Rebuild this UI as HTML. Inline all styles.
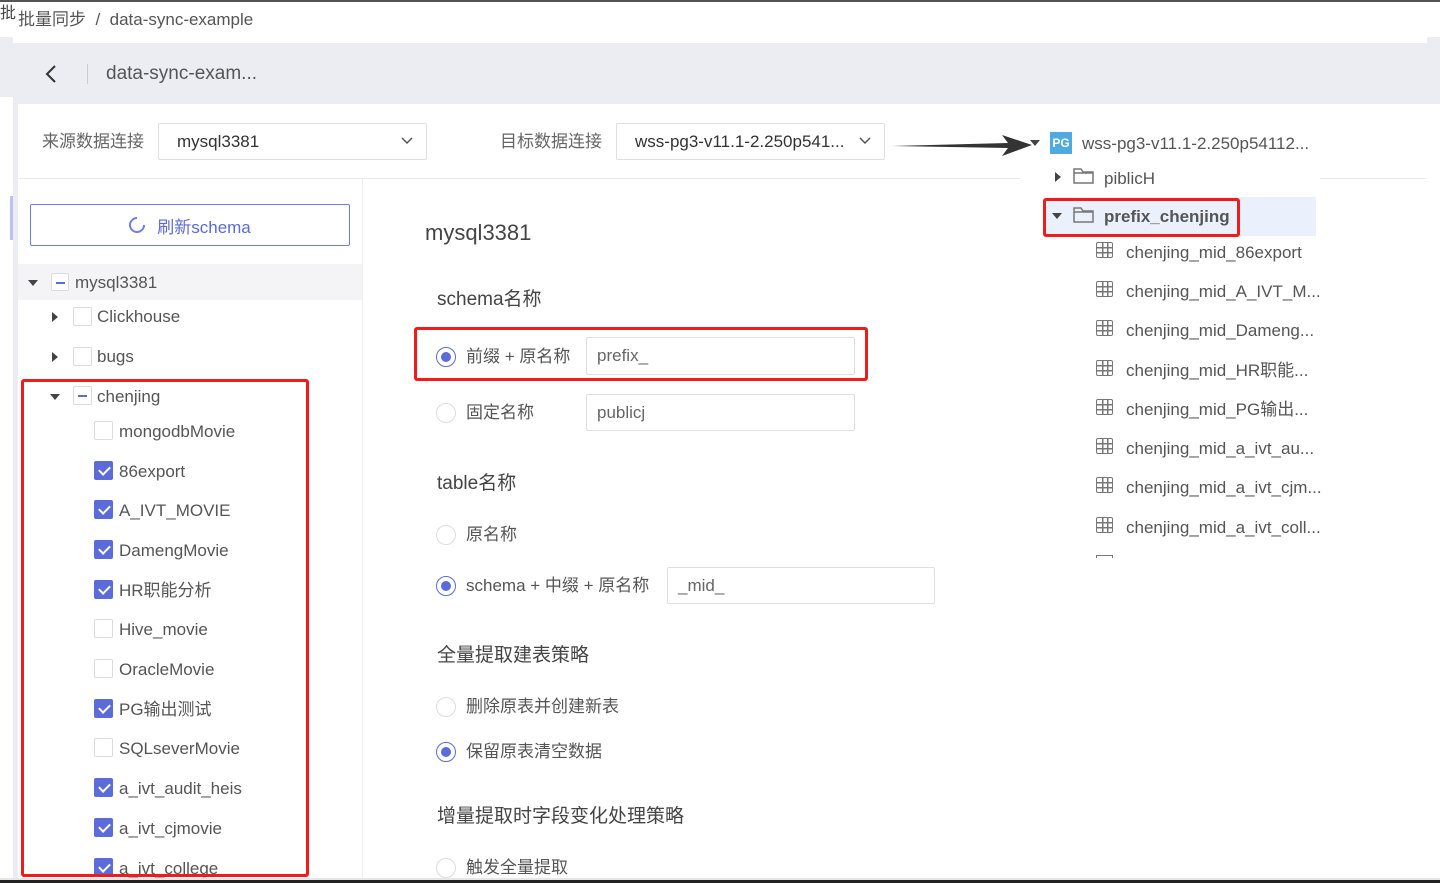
<!DOCTYPE html>
<html><head><meta charset="utf-8"><style>
*{margin:0;padding:0;box-sizing:border-box}
body{width:1440px;height:883px;overflow:hidden;background:#fff;font-family:"Liberation Sans","Noto Sans CJK SC",sans-serif;color:#555;position:relative}
.a{position:absolute;white-space:nowrap;line-height:1}
.cb{position:absolute;width:19px;height:19px;border:1px solid #dcdcdc;border-radius:2px;background:#fff}
.cb.on{background:#5b6bd8;border-color:#5b6bd8}
.cb.on::after{content:"";position:absolute;left:6px;top:2px;width:5px;height:9px;border:solid #fff;border-width:0 2px 2px 0;transform:rotate(45deg)}
.cb.ind::after{content:"";position:absolute;left:4px;top:8px;width:9px;height:2px;background:#5b6bd8}
.car{position:absolute;width:0;height:0}
.cd{border-left:5px solid transparent;border-right:5px solid transparent;border-top:6px solid #444}
.cr{border-top:5px solid transparent;border-bottom:5px solid transparent;border-left:6px solid #444}
.t{font-size:17px;color:#555}
.rad{position:absolute;width:20px;height:20px;border:1px solid #ddd;border-radius:50%;background:#fff}
.rad.on{border-color:#5b6bd8}
.rad.on::after{content:"";position:absolute;left:4px;top:4px;width:10px;height:10px;border-radius:50%;background:#5b6bd8}
.inp{position:absolute;border:1px solid #e0e0e0;border-radius:2px;font-size:17px;color:#666;padding-left:10px;display:flex;align-items:center}
.red{position:absolute;border:3px solid #f01c1c;border-radius:3px}
.tb{position:absolute;width:17px;height:16px;border:1.5px solid #777;border-radius:2px;background:linear-gradient(#777,#777) 0 4px/100% 1.5px no-repeat,linear-gradient(#777,#777) 0 9px/100% 1.5px no-repeat,linear-gradient(#777,#777) 5px 0/1.5px 100% no-repeat,linear-gradient(#777,#777) 10px 0/1.5px 100% no-repeat}
.chev{position:absolute;right:13px;top:13px}
</style></head><body>
<div style="position:absolute;left:0;top:0;width:1440px;height:2px;background:#555"></div>
<div class="a" style="left:0;top:6px;font-size:16px;color:#444">批</div>
<div class="a" style="left:18px;top:11px;font-size:17px;color:#555">批量同步 &nbsp;/&nbsp; data-sync-example</div>
<div style="position:absolute;left:13px;top:43px;width:1427px;height:61px;background:#ecedf2"></div>
<div style="position:absolute;left:0;top:37px;width:13px;height:60px;background:#ecedf2"></div>
<div style="position:absolute;left:1427px;top:37px;width:13px;height:7px;background:#ecedf2"></div>
<svg class="a" style="left:44px;top:64px" width="14" height="20"><path d="M11 2 L3 10 L11 18" fill="none" stroke="#333" stroke-width="2"/></svg>
<div style="position:absolute;left:87px;top:64px;width:1px;height:20px;background:#ccc"></div>
<div class="a" style="left:106px;top:64px;font-size:19px;color:#555">data-sync-exam...</div>
<div style="position:absolute;left:18px;top:104px;width:1409px;height:779px;background:#fff"></div>
<div style="position:absolute;left:13px;top:97px;width:5px;height:786px;background:#ecedf2"></div>
<div style="position:absolute;left:10px;top:196px;width:3px;height:44px;background:#bcc3ee"></div>
<div class="a" style="left:42px;top:133px;font-size:17px;color:#666">来源数据连接</div>
<div class="inp" style="left:158px;top:123px;width:269px;height:37px;padding-left:18px;color:#333">mysql3381<svg class="chev" width="12" height="8"><path d="M1 1 L6 6 L11 1" fill="none" stroke="#555" stroke-width="1.5"/></svg></div>
<div class="a" style="left:500px;top:133px;font-size:17px;color:#666">目标数据连接</div>
<div class="inp" style="left:616px;top:123px;width:269px;height:37px;padding-left:18px;color:#333">wss-pg3-v11.1-2.250p541...<svg class="chev" width="12" height="8"><path d="M1 1 L6 6 L11 1" fill="none" stroke="#555" stroke-width="1.5"/></svg></div>
<div style="position:absolute;left:18px;top:178px;width:1409px;height:1px;background:#eaeaea"></div>
<div style="position:absolute;left:362px;top:179px;width:1px;height:704px;background:#eee"></div>
<div style="position:absolute;left:30px;top:204px;width:320px;height:42px;border:1px solid #6f7fe0;border-radius:2px;color:#5b6bd8;font-size:17px;display:flex;align-items:center;justify-content:center"><span style="display:inline-block;width:16px;height:16px;border:2px solid #6f7fe0;border-top-color:transparent;border-radius:50%;margin-right:12px;transform:rotate(45deg)"></span>刷新schema</div>
<div style="position:absolute;left:18px;top:264px;width:344px;height:36px;background:#f4f4f6"></div>
<div class="car cd" style="left:28px;top:280px"></div><div class="cb ind" style="left:51px;top:273px;width:18px;height:18px"></div><div class="a t" style="left:75px;top:274px">mysql3381</div>
<div class="car cr" style="left:52px;top:312px"></div><div class="cb" style="left:73px;top:307px"></div><div class="a t" style="left:97px;top:308px">Clickhouse</div>
<div class="car cr" style="left:52px;top:352px"></div><div class="cb" style="left:73px;top:347px"></div><div class="a t" style="left:97px;top:348px">bugs</div>
<div class="car cd" style="left:50px;top:394px"></div><div class="cb ind" style="left:73px;top:386px"></div><div class="a t" style="left:97px;top:388px">chenjing</div>
<div class="cb" style="left:94px;top:421px"></div><div class="a t" style="left:119px;top:423px">mongodbMovie</div>
<div class="cb on" style="left:94px;top:461px"></div><div class="a t" style="left:119px;top:463px">86export</div>
<div class="cb on" style="left:94px;top:500px"></div><div class="a t" style="left:119px;top:502px">A_IVT_MOVIE</div>
<div class="cb on" style="left:94px;top:540px"></div><div class="a t" style="left:119px;top:542px">DamengMovie</div>
<div class="cb on" style="left:94px;top:580px"></div><div class="a t" style="left:119px;top:582px">HR职能分析</div>
<div class="cb" style="left:94px;top:619px"></div><div class="a t" style="left:119px;top:621px">Hive_movie</div>
<div class="cb" style="left:94px;top:659px"></div><div class="a t" style="left:119px;top:661px">OracleMovie</div>
<div class="cb on" style="left:94px;top:699px"></div><div class="a t" style="left:119px;top:701px">PG输出测试</div>
<div class="cb" style="left:94px;top:738px"></div><div class="a t" style="left:119px;top:740px">SQLseverMovie</div>
<div class="cb on" style="left:94px;top:778px"></div><div class="a t" style="left:119px;top:780px">a_ivt_audit_heis</div>
<div class="cb on" style="left:94px;top:818px"></div><div class="a t" style="left:119px;top:820px">a_ivt_cjmovie</div>
<div class="cb on" style="left:94px;top:858px"></div><div class="a t" style="left:119px;top:860px">a_ivt_college</div>
<div class="red" style="left:21px;top:379px;width:288px;height:498px"></div>
<div class="a" style="left:425px;top:222px;font-size:22px;color:#444">mysql3381</div>
<div class="a" style="left:437px;top:290px;font-size:19px;color:#444">schema名称</div>
<div class="rad on" style="left:436px;top:347px"></div><div class="a t" style="left:466px;top:348px">前缀 + 原名称</div>
<div class="inp" style="left:586px;top:337px;width:269px;height:38px">prefix_</div>
<div class="red" style="left:414px;top:327px;width:454px;height:54px"></div>
<div class="rad" style="left:436px;top:403px"></div><div class="a t" style="left:466px;top:404px">固定名称</div>
<div class="inp" style="left:586px;top:394px;width:269px;height:37px">publicj</div>
<div class="a" style="left:437px;top:474px;font-size:19px;color:#444">table名称</div>
<div class="rad" style="left:436px;top:525px"></div><div class="a t" style="left:466px;top:526px">原名称</div>
<div class="rad on" style="left:436px;top:576px"></div><div class="a t" style="left:466px;top:577px">schema + 中缀 + 原名称</div>
<div class="inp" style="left:667px;top:567px;width:268px;height:37px">_mid_</div>
<div class="a" style="left:437px;top:646px;font-size:19px;color:#444">全量提取建表策略</div>
<div class="rad" style="left:436px;top:697px"></div><div class="a t" style="left:466px;top:698px">删除原表并创建新表</div>
<div class="rad on" style="left:436px;top:742px"></div><div class="a t" style="left:466px;top:743px">保留原表清空数据</div>
<div class="a" style="left:437px;top:807px;font-size:19px;color:#444">增量提取时字段变化处理策略</div>
<div class="rad" style="left:436px;top:858px"></div><div class="a t" style="left:466px;top:859px">触发全量提取</div>
<div style="position:absolute;left:1020px;top:125px;width:300px;height:437px;background:#fff"></div>
<svg style="position:absolute;left:890px;top:134px" width="145" height="24"><path d="M2 12 L118 9 L112 1 L142 11 L112 22 L118 14 Z" fill="#333"/></svg>
<div class="car cd" style="left:1030px;top:140px"></div>
<div class="a" style="left:1050px;top:132px;width:22px;height:22px;background:#4eaadf;color:#fff;font-size:12px;font-weight:bold;line-height:22px;text-align:center">PG</div>
<div class="a t" style="left:1082px;top:135px">wss-pg3-v11.1-2.250p54112...</div>
<div class="car cr" style="left:1055px;top:172px"></div>
<svg class="a" style="left:1073px;top:166px" width="21" height="18"><path d="M1 3h7l2 3h10v11H1z M1 7h19" fill="none" stroke="#777" stroke-width="1.5"/></svg>
<div class="a t" style="left:1104px;top:170px">piblicH</div>
<div style="position:absolute;left:1044px;top:197px;width:272px;height:39px;background:#eaf1fd"></div>
<div class="car cd" style="left:1052px;top:213px"></div>
<svg class="a" style="left:1073px;top:205px" width="21" height="18"><path d="M1 3h7l2 3h10v11H1z M1 7h19" fill="none" stroke="#777" stroke-width="1.5"/></svg>
<div class="a t" style="left:1104px;top:208px;font-weight:bold;color:#555">prefix_chenjing</div>
<div class="red" style="left:1043px;top:198px;width:197px;height:39px"></div>
<div class="tb" style="left:1096px;top:242px"></div><div class="a t" style="left:1126px;top:244px">chenjing_mid_86export</div>
<div class="tb" style="left:1096px;top:281px"></div><div class="a t" style="left:1126px;top:283px">chenjing_mid_A_IVT_M...</div>
<div class="tb" style="left:1096px;top:320px"></div><div class="a t" style="left:1126px;top:322px">chenjing_mid_Dameng...</div>
<div class="tb" style="left:1096px;top:360px"></div><div class="a t" style="left:1126px;top:362px">chenjing_mid_HR职能...</div>
<div class="tb" style="left:1096px;top:399px"></div><div class="a t" style="left:1126px;top:401px">chenjing_mid_PG输出...</div>
<div class="tb" style="left:1096px;top:438px"></div><div class="a t" style="left:1126px;top:440px">chenjing_mid_a_ivt_au...</div>
<div class="tb" style="left:1096px;top:477px"></div><div class="a t" style="left:1126px;top:479px">chenjing_mid_a_ivt_cjm...</div>
<div class="tb" style="left:1096px;top:517px"></div><div class="a t" style="left:1126px;top:519px">chenjing_mid_a_ivt_coll...</div>
<div style="position:absolute;left:1096px;top:555px;width:17px;height:3px;border:1.5px solid #777;border-bottom:none"></div>
<div style="position:absolute;left:0;top:878px;width:1440px;height:2px;background:#e6e6e6"></div>
<div style="position:absolute;left:0;top:880px;width:1440px;height:3px;background:#222"></div>
</body></html>
